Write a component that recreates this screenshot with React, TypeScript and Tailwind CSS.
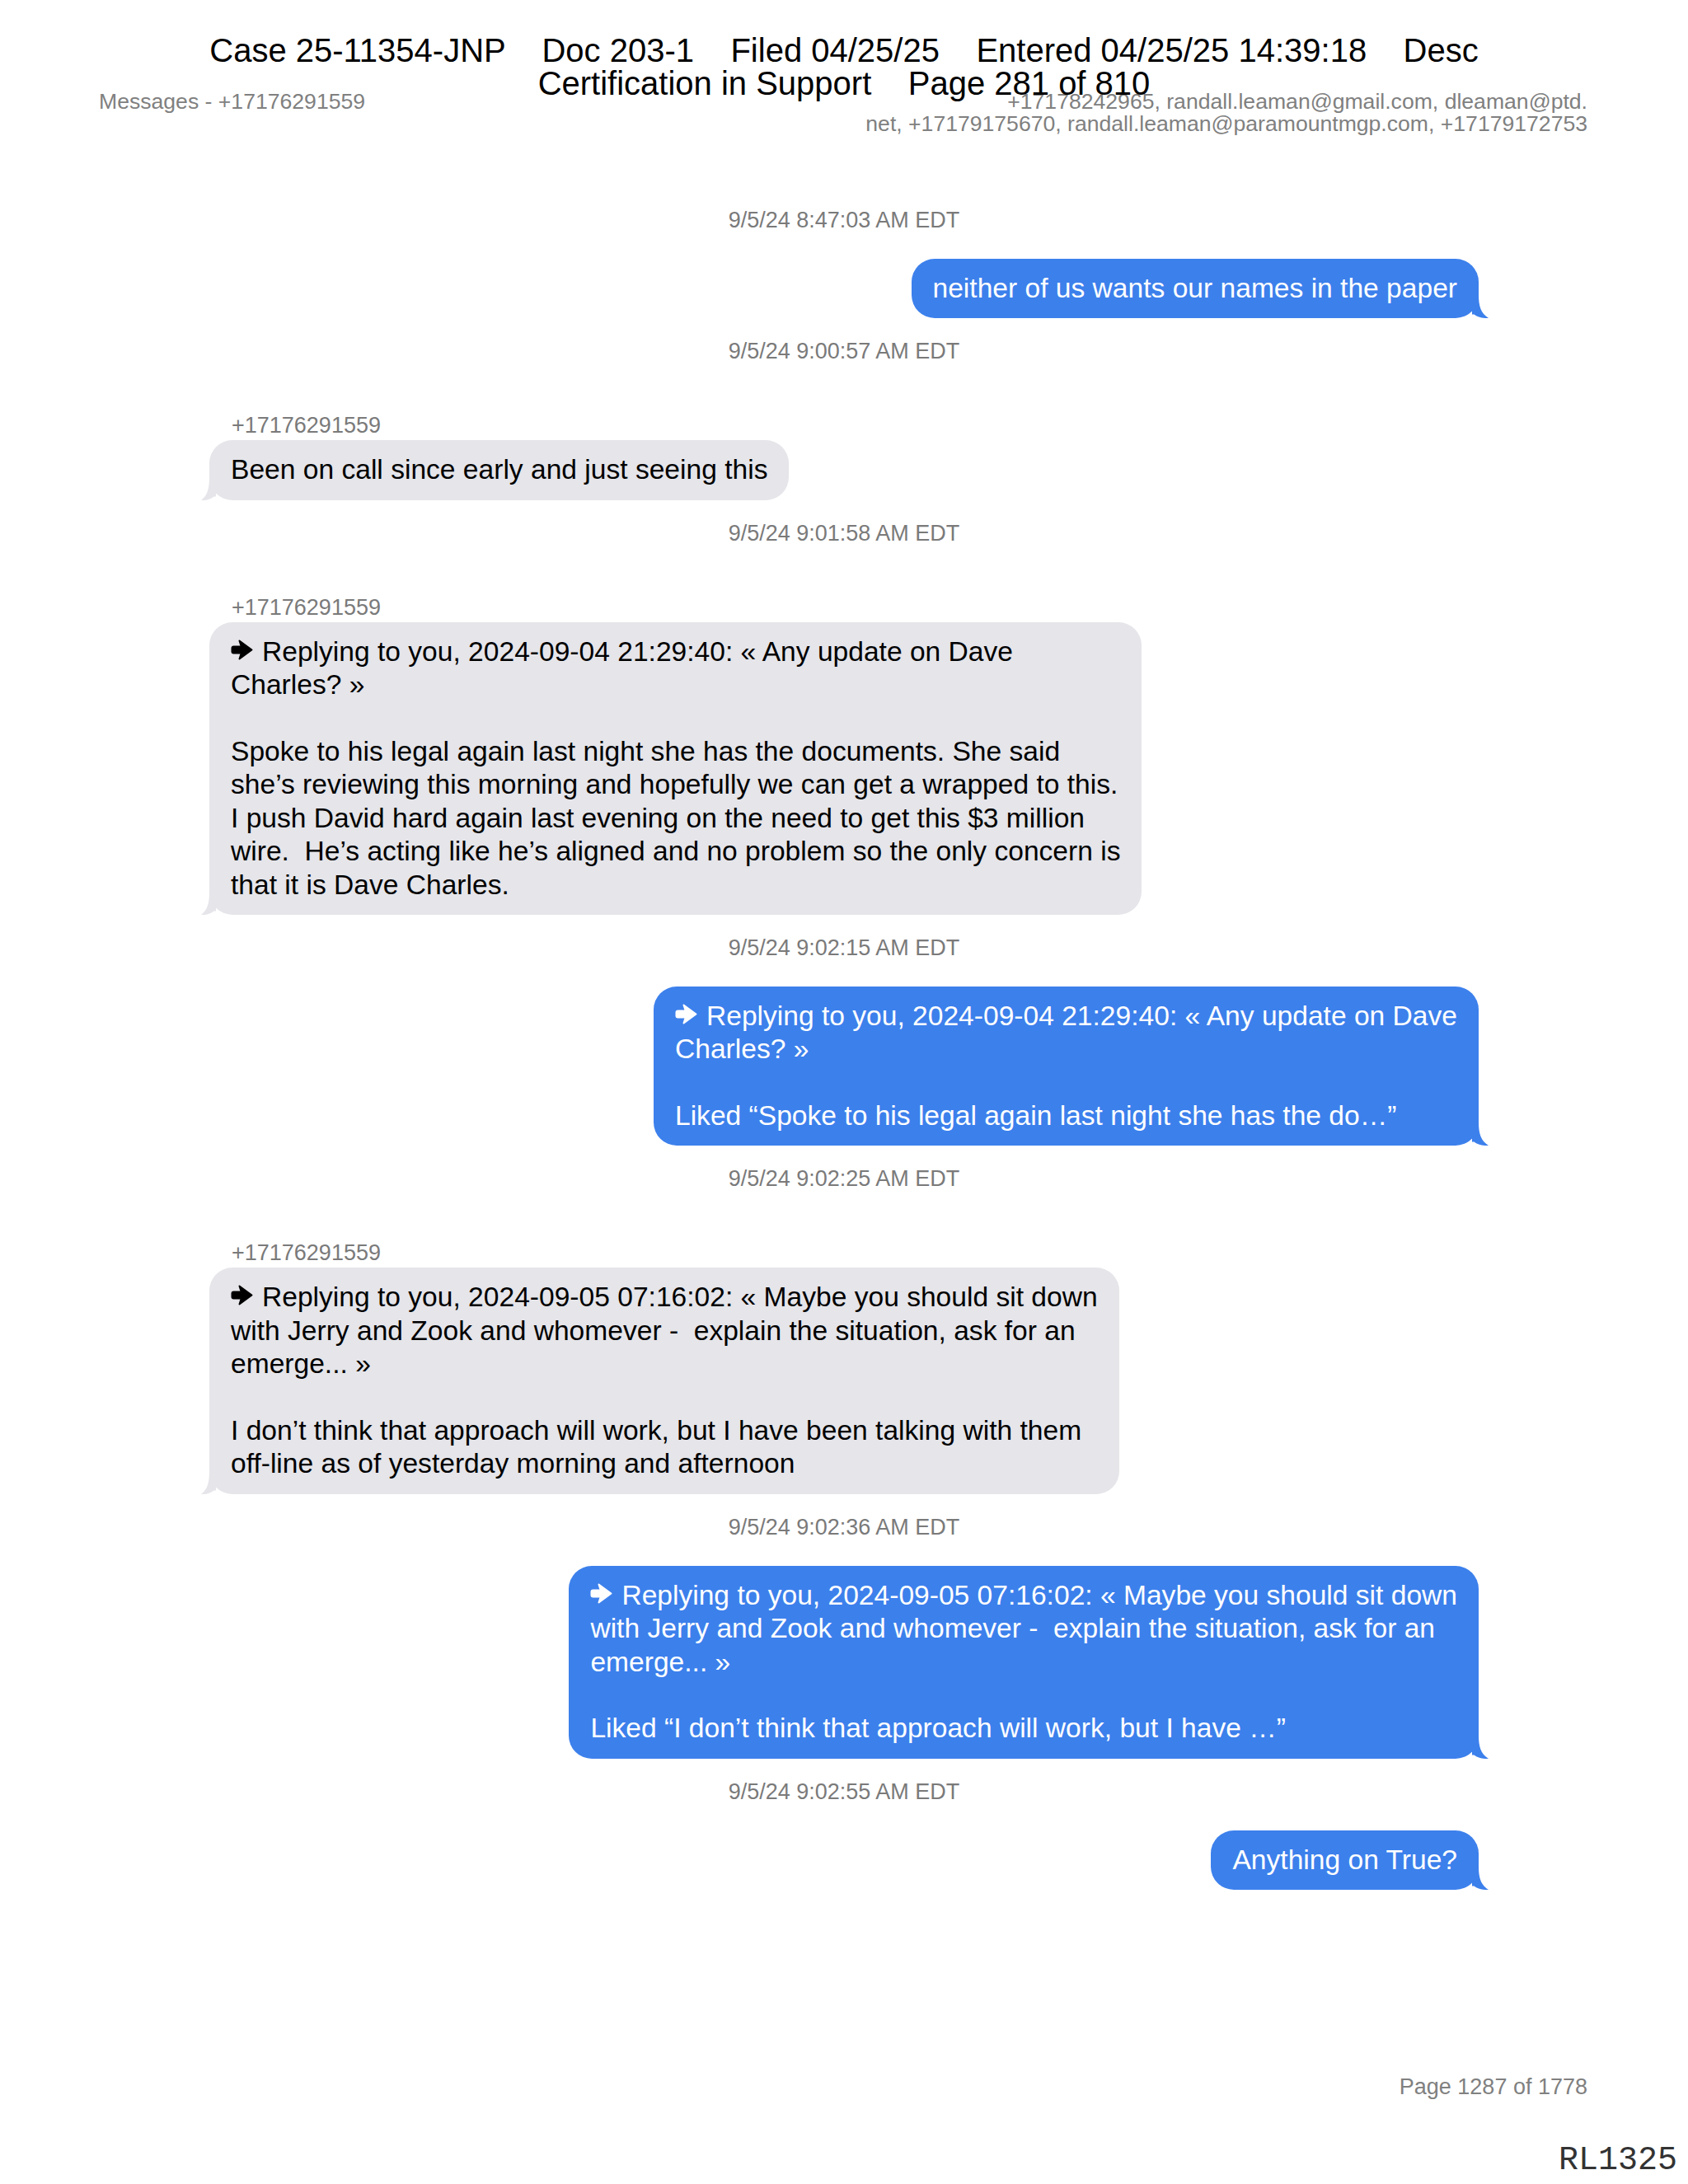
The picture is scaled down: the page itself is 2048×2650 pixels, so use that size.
import React from "react";

type Message = {
  time: string;
  out: boolean;
  from?: string;
  reply?: boolean;
  lines: string[];
};

const messages: Message[] = [
  {
    time: "9/5/24 8:47:03 AM EDT",
    out: true,
    lines: ["neither of us wants our names in the paper"],
  },
  {
    time: "9/5/24 9:00:57 AM EDT",
    out: false,
    from: "+17176291559",
    lines: ["Been on call since early and just seeing this"],
  },
  {
    time: "9/5/24 9:01:58 AM EDT",
    out: false,
    from: "+17176291559",
    reply: true,
    lines: [
      "Replying to you, 2024-09-04 21:29:40: « Any update on Dave",
      "Charles? »",
      "",
      "Spoke to his legal again last night she has the documents. She said",
      "she’s reviewing this morning and hopefully we can get a wrapped to this.",
      "I push David hard again last evening on the need to get this $3 million",
      "wire.  He’s acting like he’s aligned and no problem so the only concern is",
      "that it is Dave Charles.",
    ],
  },
  {
    time: "9/5/24 9:02:15 AM EDT",
    out: true,
    reply: true,
    lines: [
      "Replying to you, 2024-09-04 21:29:40: « Any update on Dave",
      "Charles? »",
      "",
      "Liked “Spoke to his legal again last night she has the do…”",
    ],
  },
  {
    time: "9/5/24 9:02:25 AM EDT",
    out: false,
    from: "+17176291559",
    reply: true,
    lines: [
      "Replying to you, 2024-09-05 07:16:02: « Maybe you should sit down",
      "with Jerry and Zook and whomever -  explain the situation, ask for an",
      "emerge... »",
      "",
      "I don’t think that approach will work, but I have been talking with them",
      "off-line as of yesterday morning and afternoon",
    ],
  },
  {
    time: "9/5/24 9:02:36 AM EDT",
    out: true,
    reply: true,
    lines: [
      "Replying to you, 2024-09-05 07:16:02: « Maybe you should sit down",
      "with Jerry and Zook and whomever -  explain the situation, ask for an",
      "emerge... »",
      "",
      "Liked “I don’t think that approach will work, but I have …”",
    ],
  },
  {
    time: "9/5/24 9:02:55 AM EDT",
    out: true,
    lines: ["Anything on True?"],
  },
];

// heavy "reply" arrow used by the export
function ReplyArrow() {
  return (
    <svg
      className="mr-[11px] inline-block align-[0px]"
      width="27"
      height="27"
      viewBox="0 0 27 27"
      fill="currentColor"
      stroke="currentColor"
      strokeWidth="2"
      strokeLinejoin="round"
    >
      <path d="M3.5 9.5H14V17.5H3.5Q1.5 17.5 1.5 15.5V11.5Q1.5 9.5 3.5 9.5Z" />
      <path d="M10.5 2.5L25.5 13.5L10.5 24.5L14 13.5Z" />
    </svg>
  );
}

function Tail({ out }: { out: boolean }) {
  if (out) {
    return (
      <svg className="absolute bottom-0 right-[-12px]" width="20" height="28" viewBox="0 0 20 28">
        <path d="M0 0H8C8 13 10.5 22 20 28C12.5 28.5 6.5 26.5 2.5 23.5L0 23.5Z" fill="#3c80ec" />
      </svg>
    );
  }
  return (
    <svg className="absolute bottom-0 left-[-10px] -scale-x-100" width="18" height="28" viewBox="0 0 18 28">
      <path d="M0 0H8C8 13 10 22 18 28C11.5 28.5 6 26.5 2.5 23.5L0 23.5Z" fill="#e5e5ea" />
    </svg>
  );
}

function Bubble({ msg }: { msg: Message }) {
  const colors = msg.out ? "bg-[#3c80ec] text-white" : "bg-[#e5e5ea] text-black";
  return (
    <div className={`relative w-fit rounded-[28px] px-[26px] py-[16px] text-[33.6px] leading-[40.4px] ${colors}`}>
      {msg.lines.map((line, i) => (
        <div key={i} className="h-[40.4px] whitespace-pre">
          {i === 0 && msg.reply && <ReplyArrow />}
          {line}
        </div>
      ))}
      <Tail out={msg.out} />
    </div>
  );
}

export default function App() {
  return (
    <div className="relative min-h-[2650px] w-[2048px] bg-white font-['Liberation_Sans',Arial,sans-serif]">
      {/* contact header */}
      <div className="flex justify-between pl-[120px] pr-[122px] pt-[110px] text-[26.6px] leading-[27px] text-[#808080]">
        <div>Messages - +17176291559</div>
        <div className="text-right">
          +17178242965, randall.leaman@gmail.com, dleaman@ptd.
          <br />
          net, +17179175670, randall.leaman@paramountmgp.com, +17179172753
        </div>
      </div>

      {/* conversation */}
      <div className="mx-auto mt-[88px] flex w-[1540px] flex-col">
        {messages.map((msg, i) => (
          <div key={i} className={`flex flex-col ${i > 0 ? "mt-[25px]" : ""}`}>
            <div className="text-center text-[27px] leading-[30px] text-[#7a7a7a]">{msg.time}</div>
            {msg.out ? (
              <div className="mt-[32px] flex justify-end">
                <Bubble msg={msg} />
              </div>
            ) : (
              <div className="mt-[60px] flex flex-col items-start">
                <div className="pl-[27px] text-[27px] leading-[30px] text-[#7a7a7a]">{msg.from}</div>
                <div className="mt-[3px]">
                  <Bubble msg={msg} />
                </div>
              </div>
            )}
          </div>
        ))}
      </div>

      {/* footer */}
      <div className="mt-[226px] pr-[122px] text-right text-[27px] leading-[27px] text-[#808080]">
        Page 1287 of 1778
      </div>
      <div className="mt-[56px] pr-[13px] text-right font-['Liberation_Mono','Courier_New',monospace] text-[40px] leading-[40px] text-[#333]">
        RL1325
      </div>

      {/* court filing stamp laid over the page */}
      <div className="absolute left-0 right-0 top-[41px] whitespace-pre text-center text-[40px] leading-[40px] text-black">
        <div>Case 25-11354-JNP    Doc 203-1    Filed 04/25/25    Entered 04/25/25 14:39:18    Desc</div>
        <div>Certification in Support    Page 281 of 810</div>
      </div>
    </div>
  );
}
